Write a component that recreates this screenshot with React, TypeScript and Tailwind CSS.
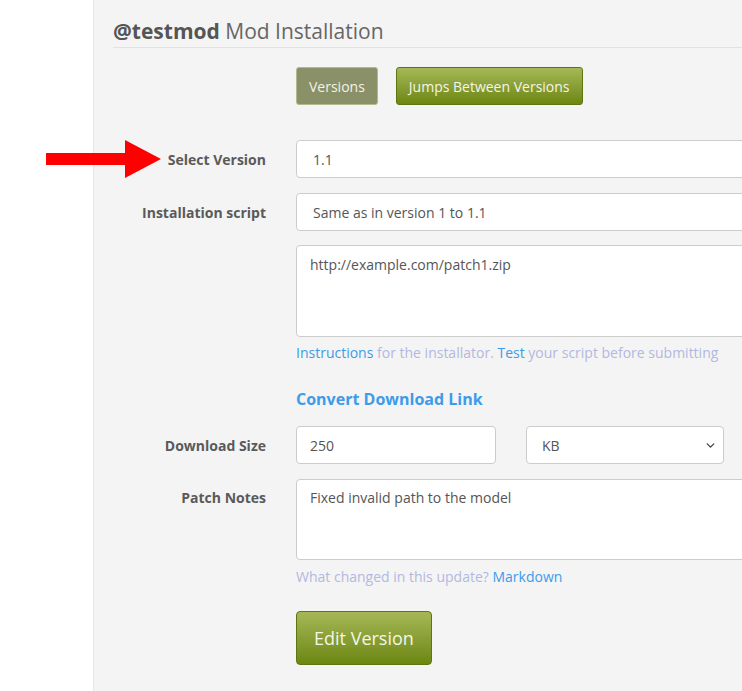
import React from 'react';
import { ChevronDown } from 'lucide-react';

const fieldClass = 'h-[38px] w-full rounded-[4px] border border-[#cccccc] bg-white px-4 text-[14px] text-[#555555] flex items-center';

const Label: React.FC<{ children: React.ReactNode; className?: string }> = ({ children, className }) => (
    <div className={`w-[153px] shrink-0 text-right text-[14px] font-bold text-[#5a5a5a] ${className || ''}`}>
        {children}
    </div>
);

const App: React.FC = () => {
    return (
        <div className="relative flex h-[691px] w-[742px] overflow-hidden bg-white" style={{ fontFamily: '"Open Sans", "Liberation Sans", sans-serif' }}>
            {/* Left sidebar */}
            <div className="w-[94px] shrink-0 border-r border-[#e6e6e6] bg-white" />

            {/* Main content */}
            <div className="flex-1 bg-[#f4f4f4] pl-[19px]">
                <h2 className="mt-[18px] border-b border-[#e2e2e2] pb-[3px] text-[21px] leading-[26px] text-[#666666]">
                    <span className="font-bold text-[#555555]">@testmod</span> Mod Installation
                </h2>

                {/* Tabs */}
                <div className="ml-[183px] mt-[19px] flex gap-[18px]">
                    <button className="h-[38px] rounded-[3px] border border-[#b3b98f] bg-[#8a9068] px-[12px] text-[14px] text-[#f3f3e6]">
                        Versions
                    </button>
                    <button className="h-[38px] rounded-[3px] border border-[#5f7511] bg-gradient-to-b from-[#a6b855] to-[#6d870c] px-[12px] text-[14px] text-[#f5f5e8]">
                        Jumps Between Versions
                    </button>
                </div>

                {/* Form */}
                <div className="mt-[35px] flex items-center">
                    <Label>Select Version</Label>
                    <div className="ml-[30px] w-[480px] shrink-0">
                        <div className={fieldClass}>1.1</div>
                    </div>
                </div>

                <div className="mt-[15px] flex items-center">
                    <Label>Installation script</Label>
                    <div className="ml-[30px] w-[480px] shrink-0">
                        <div className={fieldClass}>Same as in version 1 to 1.1</div>
                    </div>
                </div>

                <div className="ml-[183px] mt-[14px] w-[480px]">
                    <div className="h-[92px] w-full rounded-[4px] border border-[#cccccc] bg-white px-[13px] pt-[8px] text-[14px] text-[#555555]">
                        http://example.com/patch1.zip
                    </div>
                    <p className="mt-[5px] whitespace-nowrap text-[14px] text-[#b3b8e0]">
                        <span className="text-[#3d9be9]">Instructions</span> for the installator. <span className="text-[#3d9be9]">Test</span> your script before submitting
                    </p>
                </div>

                <div className="ml-[183px] mt-[24px] text-[16px] font-bold text-[#3d9be9]">
                    Convert Download Link
                </div>

                <div className="mt-[15px] flex items-center">
                    <Label>Download Size</Label>
                    <div className="ml-[30px] flex shrink-0 gap-[30px]">
                        <div className={`${fieldClass} !w-[200px] px-[13px]`}>250</div>
                        <div className={`${fieldClass} !w-[198px] justify-between px-[15px] pr-[6px]`}>
                            <span>KB</span>
                            <ChevronDown size={13} strokeWidth={2.5} className="text-[#444444]" />
                        </div>
                    </div>
                </div>

                <div className="mt-[15px] flex items-start">
                    <Label className="pt-[8px]">Patch Notes</Label>
                    <div className="ml-[30px] w-[480px] shrink-0">
                        <div className="h-[81px] w-full rounded-[4px] border border-[#cccccc] bg-white px-[13px] pt-[7px] text-[14px] text-[#555555]">
                            Fixed invalid path to the model
                        </div>
                        <p className="mt-[6px] text-[14px] text-[#b3b8e0]">
                            What changed in this update? <span className="text-[#3d9be9]">Markdown</span>
                        </p>
                    </div>
                </div>

                <div className="ml-[183px] mt-[24px]">
                    <button className="h-[54px] rounded-[4px] border border-[#5f7511] bg-gradient-to-b from-[#a6b855] to-[#6d870c] px-[17px] text-[18px] text-[#f5f5e8]">
                        Edit Version
                    </button>
                </div>
            </div>

            {/* Annotation arrow */}
            <svg className="absolute left-[46px] top-[139px]" width="116" height="40" viewBox="0 0 116 40">
                <polygon points="0,14 79,14 79,1 115,20 79,39 79,26 0,26" fill="#ff0000" />
            </svg>
        </div>
    );
};

export default App;
